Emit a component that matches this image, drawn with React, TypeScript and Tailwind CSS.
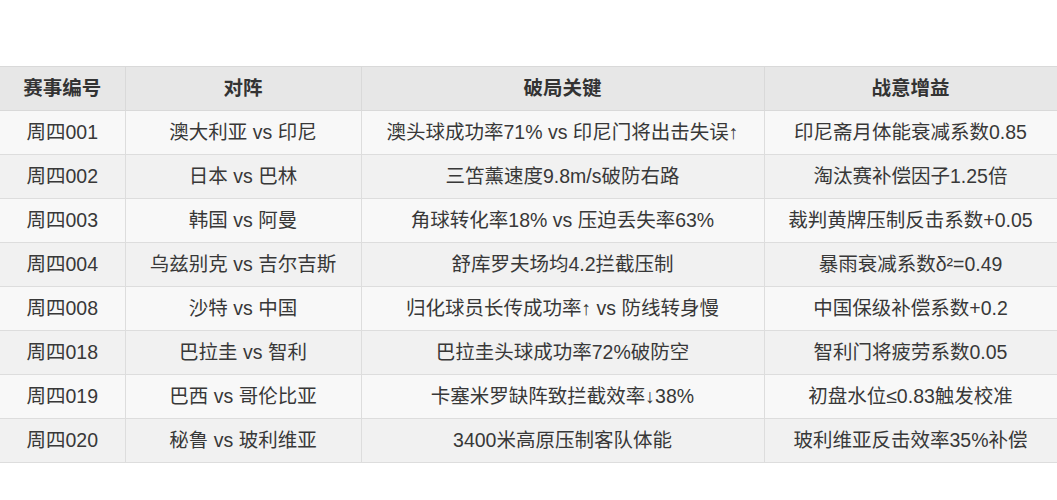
const rows = [
  ['周四001', '澳大利亚 vs 印尼', '澳头球成功率71% vs 印尼门将出击失误↑', '印尼斋月体能衰减系数0.85'],
  ['周四002', '日本 vs 巴林', '三笘薰速度9.8m/s破防右路', '淘汰赛补偿因子1.25倍'],
  ['周四003', '韩国 vs 阿曼', '角球转化率18% vs 压迫丢失率63%', '裁判黄牌压制反击系数+0.05'],
  ['周四004', '乌兹别克 vs 吉尔吉斯', '舒库罗夫场均4.2拦截压制', '暴雨衰减系数δ²=0.49'],
  ['周四008', '沙特 vs 中国', '归化球员长传成功率↑ vs 防线转身慢', '中国保级补偿系数+0.2'],
  ['周四018', '巴拉圭 vs 智利', '巴拉圭头球成功率72%破防空', '智利门将疲劳系数0.05'],
  ['周四019', '巴西 vs 哥伦比亚', '卡塞米罗缺阵致拦截效率↓38%', '初盘水位≤0.83触发校准'],
  ['周四020', '秘鲁 vs 玻利维亚', '3400米高原压制客队体能', '玻利维亚反击效率35%补偿'],
]

const headers = ['赛事编号', '对阵', '破局关键', '战意增益']

export default function App() {
  return (
    <div
      className="min-h-[500px] bg-white pt-[66px] text-[#383838]"
      style={{ fontFamily: '"Liberation Sans", "Noto Sans CJK SC", sans-serif' }}
    >
      <table className="w-[1057px] table-fixed border-collapse text-[19.5px]">
        <colgroup>
          <col className="w-[125px]" />
          <col className="w-[236px]" />
          <col className="w-[403px]" />
          <col className="w-[293px]" />
        </colgroup>
        <thead>
          <tr className="h-[44px] bg-[#e7e7e7]">
            {headers.map((h) => (
              <th key={h} className="border border-[#d9d9d9] border-l-0 font-bold text-center text-[#333333]">
                {h}
              </th>
            ))}
          </tr>
        </thead>
        <tbody>
          {rows.map((row, i) => (
            <tr key={row[0]} className={`h-[44px] ${i % 2 === 0 ? 'bg-[#f8f8f8]' : 'bg-[#f1f1f1]'}`}>
              {row.map((cell, j) => (
                <td key={j} className="border border-[#dddddd] border-l-0 text-center whitespace-nowrap">
                  {cell}
                </td>
              ))}
            </tr>
          ))}
        </tbody>
      </table>
    </div>
  )
}
